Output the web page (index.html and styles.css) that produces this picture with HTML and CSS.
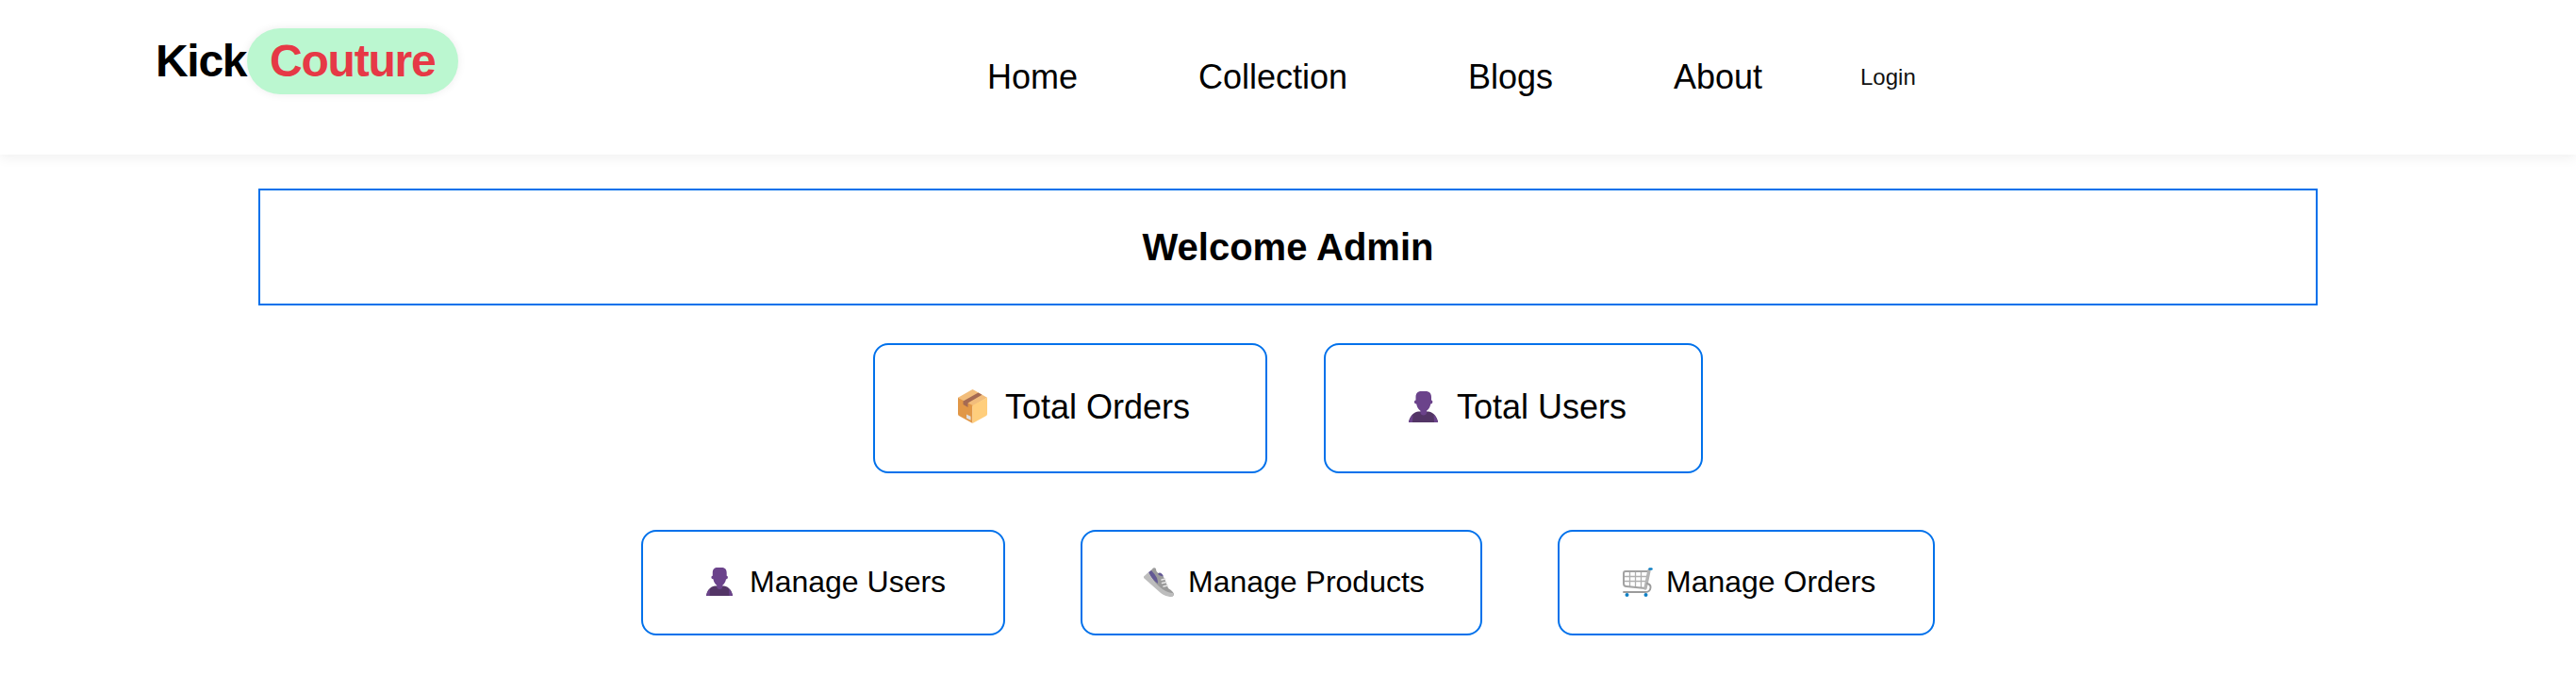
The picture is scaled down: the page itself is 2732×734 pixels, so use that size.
FILE: index.html
```html
<!DOCTYPE html>
<html lang="en">
<head>
<meta charset="utf-8">
<title>Kick Couture</title>
<link rel="stylesheet" href="styles.css">
</head>
<body>
<svg class="defs" width="0" height="0" aria-hidden="true">
  <symbol id="user" viewBox="0 0 31 33">
    <path fill="#533566" d="M0 33C.5 28 4 22.500 10 21.500h11C27 22.500 30.500 28 31 33z"/>
    <path fill="#6b438b" d="M0 33C.5 30 2 27 4.500 25L4 33zM31 33c-.5-3-2-6-4.500-8l.5 8z"/>
    <path fill="#6b438b" d="M7.500 9.500V6C7.500 2 10 0 13 0h5c3.500 0 6 2 6 6v3.500c2 0 1.800 4-.7 4-.7 3.500-2.300 6-4.300 7.300v2.200c0 3.300-6.500 3.300-6.500 0v-2.200c-2-1.300-3.600-3.800-4.300-7.300-2.700 0-2.900-4-.7-4z"/>
  </symbol>
  <symbol id="box" viewBox="0 0 31 36">
    <path fill="#f2bd7b" d="M14.500.5q1-.8 2 0L31 8.700 15.500 18 0 8.700z"/>
    <path fill="#e19747" d="M0 8.700L15.500 17v19L1 28Q0 27.300 0 26z"/>
    <path fill="#ffce7c" d="M31 8.700L15.500 17v19L30 28q1-.7 1-2z"/>
    <path fill="#a56a53" d="M5.500 12.500L21.500 3.500l4 2.200L10.500 14.500v4.500L5.500 16z"/>
    <path fill="#dfdfdf" d="M9 26.500l4.500 2.200v4L9 30.500z"/>
  </symbol>
  <symbol id="shoe" viewBox="0 0 32 31">
    <path fill="#9b9b9b" d="M5 6L10 .5q2-1 3 1 0 4 4 5 3 1 5 5L26 22q5 3 6 6 0 3-4 3L17 24z"/>
    <path fill="#635994" d="M15 7q2-3 5 .5l1 2-4-1z"/>
    <path fill="#635994" d="M5 5l3-2q4 4 6 8 1 3 1 6Q9 13 5 5z"/>
    <path fill="#bdbdbd" d="M0 9.500L5 5q5 11 15 18 6 4 11 4 2 2-1 4-7 0-12-4L0 11z"/>
    <path stroke="#e8e8e8" stroke-width="1.500" stroke-linecap="round" d="M19 13l4-1M19.500 16.500l4.500-1M21 20l4.500-1"/>
  </symbol>
  <symbol id="cart" viewBox="0 0 32 31">
    <g fill="none" stroke-linecap="round" stroke-linejoin="round">
      <path stroke="#b0b0b0" stroke-width="1.300" d="M7.500 5v15M13.500 5v15M19.500 5v16M2 9.500h23M2 14.500h23"/>
      <path stroke="#a2a2a2" stroke-width="2" d="M27 4H3Q1 4 1 6v11q0 3 3 3l20 2"/>
      <path stroke="#b4b4b4" stroke-width="3.500" d="M28 3l-4 19"/>
      <path stroke="#9b9b9b" stroke-width="1.900" d="M26 17q4 1 3.500 4.500Q29 26 24 26H1"/>
      <path stroke="#0f7fc4" stroke-width="2.400" d="M28.500 1.500h2"/>
    </g>
    <circle cx="4.500" cy="29" r="2" fill="#0f7fc4"/><circle cx="24.500" cy="29" r="2" fill="#0f7fc4"/>
  </symbol>
</svg>
<header class="header">
  <a class="logo"><span class="kick">Kick</span><span class="couture">Couture</span></a>
  <nav class="nav"><a>Home</a><a>Collection</a><a>Blogs</a><a>About</a><a class="login">Login</a></nav>
</header>
<main class="main">
  <h1 class="welcome">Welcome Admin</h1>
  <section class="row totals">
    <div class="card orders"><svg class="icon icon-box"><use href="#box"/></svg><span>Total Orders</span></div>
    <div class="card users"><svg class="icon icon-user"><use href="#user"/></svg><span>Total Users</span></div>
  </section>
  <section class="row manage">
    <div class="card m-users"><svg class="icon icon-user"><use href="#user"/></svg><span>Manage Users</span></div>
    <div class="card m-products"><svg class="icon icon-shoe"><use href="#shoe"/></svg><span>Manage Products</span></div>
    <div class="card m-orders"><svg class="icon icon-cart"><use href="#cart"/></svg><span>Manage Orders</span></div>
  </section>
</main>
</body>
</html>
```
FILE: styles.css
```css
* { box-sizing: border-box; }
body { margin: 0; background: #fff; color: #000; font-family: Arial, "Liberation Sans", sans-serif; }
.defs { display: block; height: 0; }
.header { height: 164px; display: flex; align-items: flex-start; background: #fff; box-shadow: 0 4px 12px rgba(0, 0, 0, .06); }
.logo { width: 1047px; padding: 30px 0 0 165px; display: flex; font-size: 48px; font-weight: 700; line-height: 70px; letter-spacing: -1.2px; }
.kick { width: 97px; letter-spacing: -1.3px; }
.couture { width: 224px; height: 70px; padding-left: 24px; border-radius: 35px; background: #bbf7d0; color: #e63946; box-shadow: 0 0 10px rgba(0, 0, 0, .08); }
.nav { display: grid; grid-template-columns: 224px 286px 218px 198px auto; height: 164px; align-items: center; font-size: 36px; line-height: 40px; }
.login { font-size: 24px; color: #111; }
.main { display: flex; flex-direction: column; align-items: center; padding-top: 36px; }
.welcome { width: 2184px; height: 124px; margin: 0; border: 2px solid #0071eb; font-size: 40px; line-height: 120px; text-align: center; }
.row { display: flex; }
.totals { gap: 60px; margin-top: 40px; font-size: 36px; }
.manage { gap: 80px; margin-top: 60px; font-size: 32px; }
.card { display: flex; align-items: center; border: 2px solid #0071eb; border-radius: 16px; white-space: nowrap; }
.totals .card { height: 138px; padding: 0 0 4px 80px; }
.totals span { padding-top: 2px; }
.manage .card { height: 112px; padding: 0 0 2px 60px; }
.orders { width: 418px; }
.users { width: 402px; }
.m-users { width: 386px; }
.m-products { width: 426px; }
.m-orders { width: 400px; }
.icon { flex: none; overflow: visible; }
.icon-box { width: 31px; height: 36px; margin: 0 19px 0 8px; }
.icon-user { width: 31px; height: 33px; margin: 0 20px 0 8px; }
.manage .icon-user { width: 28px; height: 30px; margin: 0 18px 0 7px; }
.icon-shoe { width: 32px; height: 31px; margin: 0 15px 0 5px; }
.icon-cart { width: 32px; height: 31px; margin: 0 14px 0 7px; }
```
